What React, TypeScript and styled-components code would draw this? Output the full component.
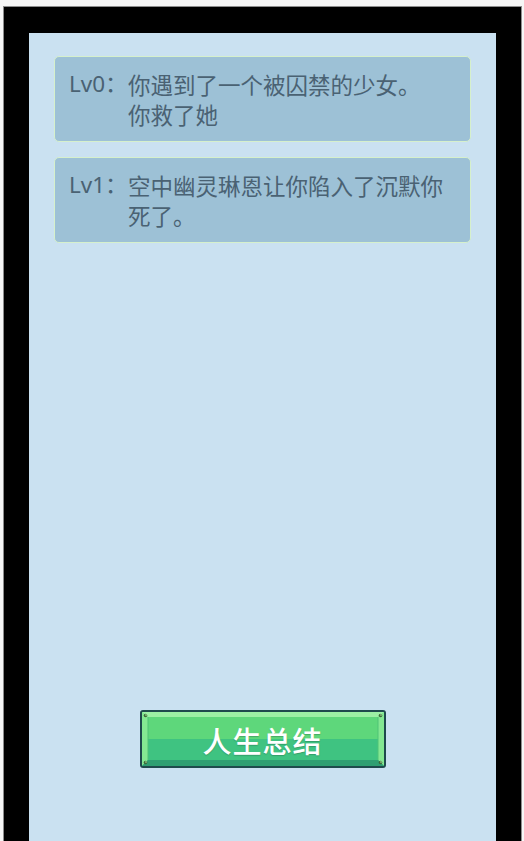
import React from "react";
import styled, { createGlobalStyle } from "styled-components";

const GlobalStyle = createGlobalStyle`
  html, body {
    margin: 0;
    padding: 0;
    background: #f6f6f6;
    overflow: hidden;
  }
  * { box-sizing: border-box; }
`;

const Viewport = styled.div`
  padding: 6px 2px 0 3px;
`;

const Frame = styled.div`
  background: #000;
  border: 1px solid #8d8d8d;
  border-bottom: none;
  padding: 26px 25px 0 25px;
`;

const Panel = styled.main`
  background: #cae1f1;
  padding: 23px 25px 90px;
  display: flex;
  flex-direction: column;
  align-items: center;
`;

const LogList = styled.section`
  align-self: stretch;
  height: 631px;
  display: flex;
  flex-direction: column;
  gap: 15px;
`;

const LogCard = styled.article`
  display: flex;
  background: #9dc1d6;
  border: 1px solid #d6f0cc;
  border-radius: 5px;
  padding: 12px 14px 12px 14px;
  font-family: "Noto Sans", "Noto Sans CJK SC", sans-serif;
  font-size: 22.5px;
  line-height: 30px;
  color: #4a6273;
`;

const Level = styled.span`
  flex: none;
  white-space: nowrap;
  width: 59px;
`;

const Event = styled.span`
  flex: 1;
  white-space: pre-line;
  font-family: "Noto Sans CJK SC", sans-serif;
`;

const ButtonRow = styled.div`
  margin-top: 23px;
  display: flex;
  justify-content: center;
`;

const SummaryButton = styled.button`
  position: relative;
  width: 246px;
  height: 58px;
  padding: 0;
  border: none;
  background: none;
  cursor: pointer;
  display: flex;
  align-items: center;
  justify-content: center;
`;

const ButtonFace = styled.svg`
  position: absolute;
  inset: 0;
`;

const ButtonLabel = styled.span`
  position: relative;
  font-family: "Noto Sans CJK SC", sans-serif;
  font-size: 29px;
  font-weight: 500;
  color: #ffffff;
  letter-spacing: 1px;
  margin-top: 2px;
  text-shadow: 0 1px 1px rgba(30, 90, 60, 0.35);
`;

const logs = [
  { level: "Lv0：", text: "你遇到了一个被囚禁的少女。\n你救了她" },
  { level: "Lv1：", text: "空中幽灵琳恩让你陷入了沉默你死了。" },
];

function ButtonArt() {
  return (
    <ButtonFace width="246" height="58" viewBox="0 0 246 58">
      <rect x="0" y="0" width="246" height="58" rx="3" fill="#1f4a4d" />
      <rect x="2" y="2" width="242" height="54" fill="#5ed77b" />
      <rect x="8" y="29" width="230" height="21" fill="#3fc381" />
      <rect x="2" y="50" width="242" height="6" fill="#35a979" />
      <polygon points="2,2 244,2 238,7 8,7" fill="#9cf0a4" />
      <polygon points="2,2 8,7 8,50 2,56" fill="#84e892" />
      <polygon points="244,2 238,7 238,50 244,56" fill="#84e892" />
      <polygon points="2,56 8,50 238,50 244,56" fill="#2f9f72" />
      <line x1="8" y1="7" x2="8" y2="50" stroke="#4ec276" strokeWidth="1" />
      <line x1="238" y1="7" x2="238" y2="50" stroke="#4ec276" strokeWidth="1" />
      <circle cx="5.5" cy="5.5" r="1.8" fill="#3b6a3a" />
      <circle cx="240.5" cy="5.5" r="1.8" fill="#3b6a3a" />
      <circle cx="5.5" cy="52.5" r="1.8" fill="#3b6a3a" />
      <circle cx="240.5" cy="52.5" r="1.8" fill="#3b6a3a" />
      <circle cx="6" cy="5" r="0.8" fill="#b8f0a8" />
      <circle cx="241" cy="5" r="0.8" fill="#b8f0a8" />
      <circle cx="6" cy="52" r="0.8" fill="#b8f0a8" />
      <circle cx="241" cy="52" r="0.8" fill="#b8f0a8" />
    </ButtonFace>
  );
}

export default function App() {
  return (
    <>
      <GlobalStyle />
      <Viewport>
        <Frame>
          <Panel>
            <LogList>
              {logs.map((log) => (
                <LogCard key={log.level}>
                  <Level>{log.level}</Level>
                  <Event>{log.text}</Event>
                </LogCard>
              ))}
            </LogList>
            <ButtonRow>
              <SummaryButton type="button">
                <ButtonArt />
                <ButtonLabel>人生总结</ButtonLabel>
              </SummaryButton>
            </ButtonRow>
          </Panel>
        </Frame>
      </Viewport>
    </>
  );
}
